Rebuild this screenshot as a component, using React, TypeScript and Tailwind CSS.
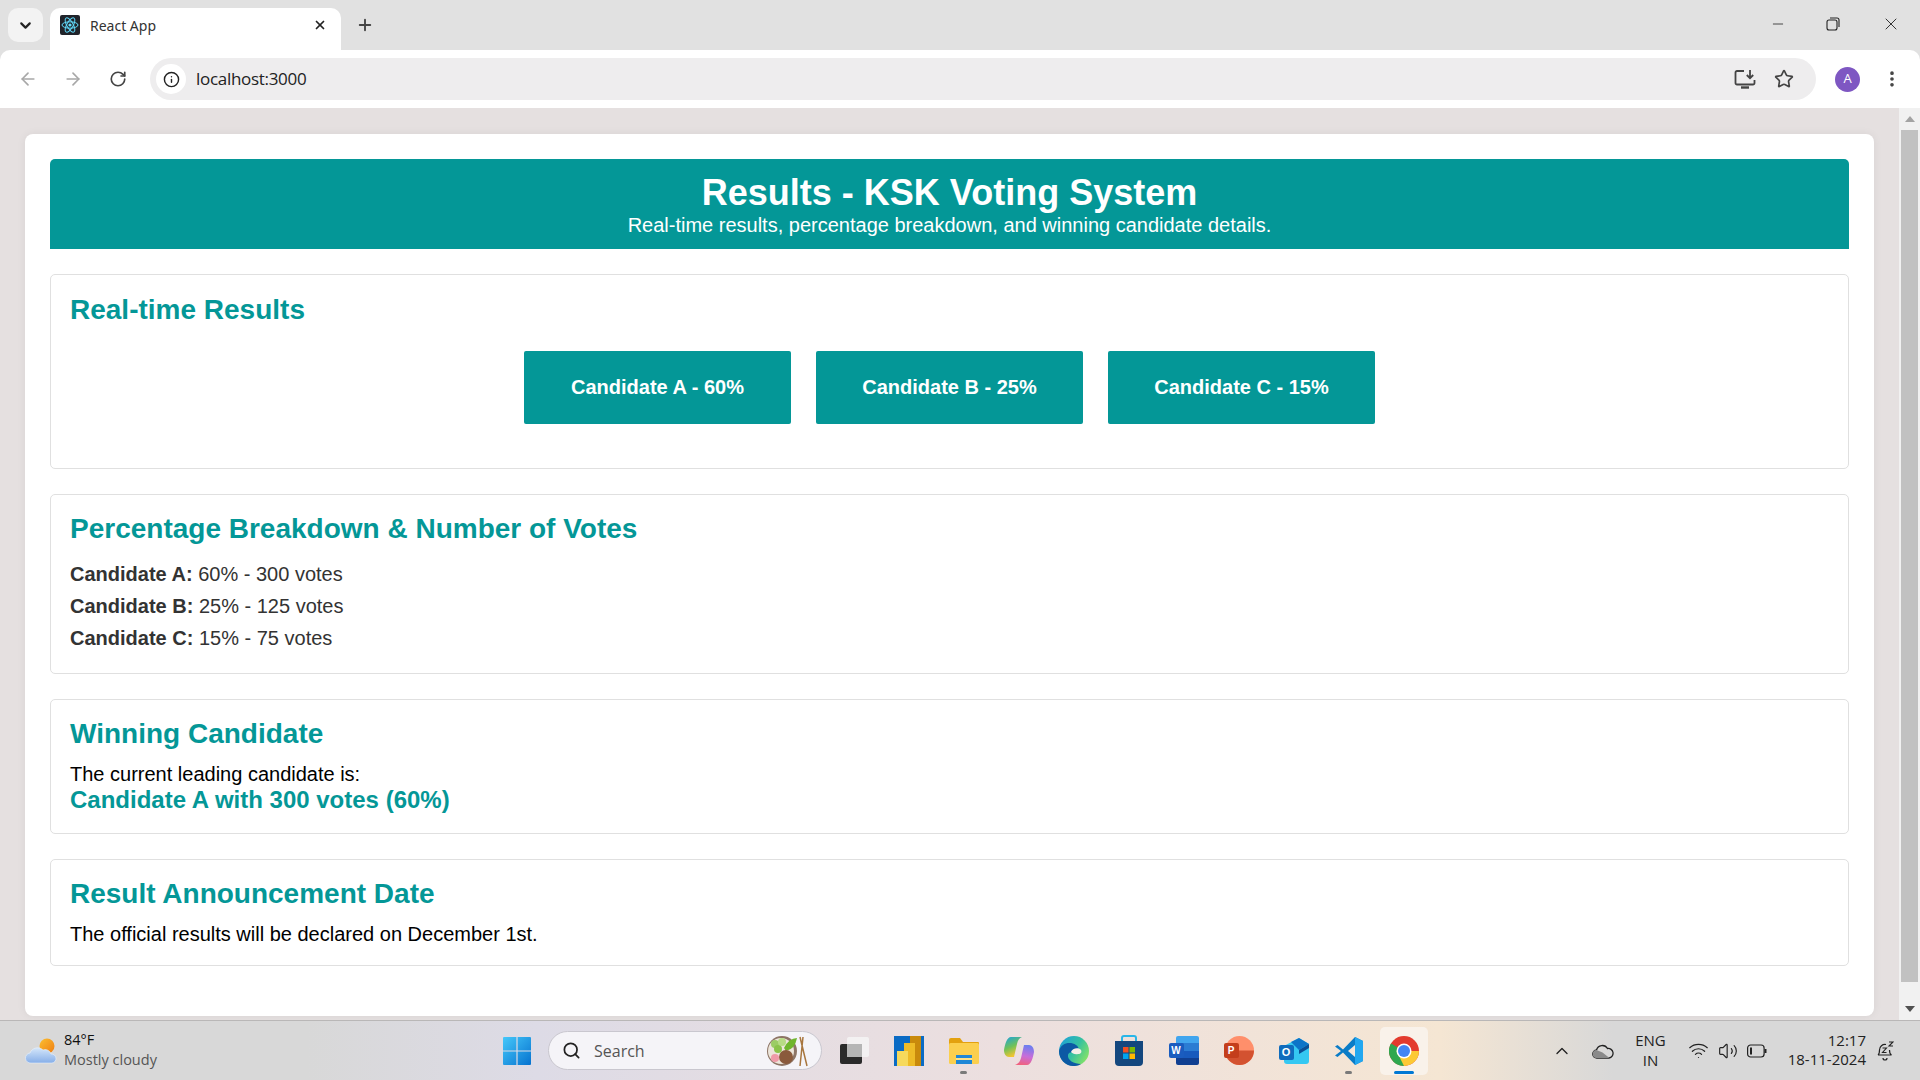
import { ChevronDown, X, Plus, ArrowLeft, ArrowRight, RotateCw, Info, Star, EllipsisVertical, Minus, Search, ChevronUp, Wifi, Volume2 } from 'lucide-react'

const candidates = [
  { name: 'Candidate A', pct: 60, votes: 300 },
  { name: 'Candidate B', pct: 25, votes: 125 },
  { name: 'Candidate C', pct: 15, votes: 75 },
]

function ReactFavicon() {
  return (
    <svg width="20" height="20" viewBox="0 0 20 20" className="shrink-0">
      <rect width="20" height="20" rx="2" fill="#20232a" />
      <g fill="none" stroke="#61dafb" strokeWidth="1">
        <ellipse cx="10" cy="10" rx="8" ry="3.2" />
        <ellipse cx="10" cy="10" rx="8" ry="3.2" transform="rotate(60 10 10)" />
        <ellipse cx="10" cy="10" rx="8" ry="3.2" transform="rotate(120 10 10)" />
      </g>
      <circle cx="10" cy="10" r="1.6" fill="#61dafb" />
    </svg>
  )
}

function TabStrip() {
  return (
    <div className="h-[50px] bg-[#e1e1e1] flex shrink-0 relative">
      <div className="mt-2 ml-2 w-[35px] h-[34px] rounded-[10px] bg-[#f3f3f3] flex items-center justify-center">
        <ChevronDown className="w-[17px] h-[17px] text-[#222]" strokeWidth={3} />
      </div>
      <div className="mt-2 ml-[7px] w-[291px] h-[42px] bg-white rounded-t-[10px] flex items-center pl-[10px] pr-[14px] pb-[8px]">
        <ReactFavicon />
        <span className="ml-[10px] text-[14px] text-[#333] flex-1">React App</span>
        <X className="w-[14px] h-[14px] text-[#222]" strokeWidth={3} />
      </div>
      <Plus className="w-[18px] h-[18px] text-[#444] mt-[16px] ml-[15px]" strokeWidth={2.5} />
      <div className="ml-auto flex items-start text-[#222]">
        <Minus className="w-[16px] h-[16px] mt-[16px] mr-[40px]" strokeWidth={1.2} />
        <svg width="14" height="14" viewBox="0 0 14 14" fill="none" stroke="#222" strokeWidth="1.1" className="mt-[17px] mr-[41px]">
          <rect x="1" y="3" width="10" height="10" rx="2" />
          <path d="M4 1h7a2 2 0 0 1 2 2v7" />
        </svg>
        <X className="w-[20px] h-[20px] mt-[14px] mr-[19px]" strokeWidth={1.1} />
      </div>
    </div>
  )
}

function Toolbar() {
  return (
    <div className="h-[58px] bg-white rounded-t-[10px] flex items-center shrink-0 pl-[18px] pr-[20px] relative">
      <ArrowLeft className="w-[20px] h-[20px] text-[#a8a8a8] mr-[25px]" strokeWidth={2} />
      <ArrowRight className="w-[20px] h-[20px] text-[#a8a8a8] mr-[26px]" strokeWidth={2} />
      <RotateCw className="w-[18px] h-[18px] text-[#444] mr-[23px]" strokeWidth={2.2} />
      <div className="flex-1 h-[42px] mr-[20px] rounded-full bg-[#eeedee] flex items-center pl-[6px] pr-[22px]">
        <div className="w-[30px] h-[30px] rounded-full bg-white flex items-center justify-center">
          <Info className="w-[17px] h-[17px] text-[#222]" strokeWidth={2} />
        </div>
        <span className="ml-[10px] text-[17px] text-[#222] flex-1 font-['Open_Sans',sans-serif] tracking-[-0.3px]">localhost:3000</span>
        <svg width="22" height="20" viewBox="0 0 22 20" fill="none" stroke="#444" strokeWidth="1.8" className="mr-[18px]">
          <path d="M10 2H3a1.5 1.5 0 0 0-1.5 1.5V14A1.5 1.5 0 0 0 3 15.5h16a1.5 1.5 0 0 0 1.5-1.5v-3" />
          <path d="M7 18.5h8" strokeWidth="2.4" />
          <path d="M16 1v8M12.8 6l3.2 3.2L19.2 6" />
        </svg>
        <Star className="w-[20px] h-[20px] text-[#444]" strokeWidth={2} />
      </div>
      <div className="w-[25px] h-[25px] rounded-full bg-[#7e57c2] text-white text-[13px] flex items-center justify-center mr-[22px] ml-[-1px] font-['Open_Sans',sans-serif]">A</div>
      <EllipsisVertical className="w-[20px] h-[20px] text-[#444] mr-[-2px]" strokeWidth={2.4} />
    </div>
  )
}

function Section({ title, className, children }: { title: string; className: string; children: React.ReactNode }) {
  return (
    <section className={`border border-[#e0e0e0] rounded-[5px] px-[19px] mb-[25px] ${className}`}>
      <h2 className="text-[28px] leading-[33px] font-bold text-[#049797]">{title}</h2>
      {children}
    </section>
  )
}

function ResultsPage() {
  return (
    <main className="flex-1 min-w-0 bg-[#e5e0e0] pt-[26px] pl-[25px] pr-[25px] font-['Liberation_Sans',Arial,sans-serif]">
      <div className="bg-white rounded-[8px] h-[882px] p-[25px] shadow-[0_0_10px_rgba(0,0,0,0.06)]">
        <header className="bg-[#049797] text-white rounded-t-[5px] h-[90px] mb-[25px] flex flex-col items-center pt-[12px]">
          <h1 className="text-[36px] leading-[44px] font-bold">Results - KSK Voting System</h1>
          <p className="text-[20px] leading-[20px]">Real-time results, percentage breakdown, and winning candidate details.</p>
        </header>

        <Section title="Real-time Results" className="pt-[18px] pb-[44px]">
          <div className="flex justify-center gap-[25px] mt-[25px]">
            {candidates.map((c) => (
              <div key={c.name} className="w-[267px] h-[73px] pb-[2px] bg-[#049797] text-white rounded-[2px] text-[20px] font-bold flex items-center justify-center">
                {c.name} - {c.pct}%
              </div>
            ))}
          </div>
        </Section>

        <Section title="Percentage Breakdown & Number of Votes" className="pt-[17px] pb-[19px]">
          <ul className="mt-[13px] text-[#333] text-[20px] leading-[32px]">
            {candidates.map((c) => (
              <li key={c.name}>
                <strong>{c.name}:</strong> {c.pct}% - {c.votes} votes
              </li>
            ))}
          </ul>
        </Section>

        <Section title="Winning Candidate" className="pt-[17px] pb-[20px]">
          <p className="mt-[12px] text-black text-[20px] leading-[25px]">The current leading candidate is:</p>
          <p className="text-[#049797] text-[24px] leading-[26px] font-bold">Candidate A with 300 votes (60%)</p>
        </Section>

        <Section title="Result Announcement Date" className="pt-[17px] pb-[14px]">
          <p className="mt-[7px] text-black text-[20px] leading-[34px]">The official results will be declared on December 1st.</p>
        </Section>
      </div>
    </main>
  )
}

function Scrollbar() {
  return (
    <aside className="w-[21px] bg-[#f1f1f1] flex flex-col items-center shrink-0">
      <div className="h-[22px] flex items-center justify-center">
        <div className="w-0 h-0 border-l-[5px] border-r-[5px] border-b-[6px] border-l-transparent border-r-transparent border-b-[#a3a3a3]" />
      </div>
      <div className="w-[17px] h-[852px] bg-[#c1c1c1]" />
      <div className="mt-auto h-[22px] flex items-center justify-center">
        <div className="w-0 h-0 border-l-[5px] border-r-[5px] border-t-[6px] border-l-transparent border-r-transparent border-t-[#505050]" />
      </div>
    </aside>
  )
}

function AppSlot({ children, running, active }: { children: React.ReactNode; running?: boolean; active?: boolean }) {
  return (
    <div className={`w-[48px] h-[48px] mx-[3.5px] rounded-[5px] flex items-center justify-center relative ${active ? 'bg-[#f9f2ea]' : ''}`}>
      {children}
      {running && <span className="absolute bottom-[1px] w-[7px] h-[3px] rounded-full bg-[#7a7a7a]" />}
      {active && <span className="absolute bottom-[1px] w-[20px] h-[3px] rounded-full bg-[#0078d4]" />}
    </div>
  )
}

function WindowsLogo() {
  return (
    <svg width="30" height="30" viewBox="0 0 30 30">
      <defs>
        <linearGradient id="win" x1="0" y1="0" x2="1" y2="1">
          <stop offset="0" stopColor="#45c8fa" />
          <stop offset="1" stopColor="#0672cf" />
        </linearGradient>
      </defs>
      <path fill="url(#win)" d="M1 2a1 1 0 0 1 1-1h12.4v13.4H1zM15.6 1H28a1 1 0 0 1 1 1v12.4H15.6zM1 15.6h13.4V29H2a1 1 0 0 1-1-1zM15.6 15.6H29V28a1 1 0 0 1-1 1H15.6z" />
    </svg>
  )
}

function SearchBox() {
  return (
    <div className="w-[274px] h-[39px] mx-[4px] rounded-full bg-[#f5f4f8] border border-[#c9c7cf] flex items-center pl-[13px] pr-[12px] relative">
      <Search className="w-[19px] h-[19px] text-[#222]" strokeWidth={2.2} />
      <span className="ml-[13px] text-[16px] text-[#555] font-['Open_Sans',sans-serif]">Search</span>
      <svg width="42" height="32" viewBox="0 0 42 32" className="absolute right-[12px] top-[3px]">
        <circle cx="15" cy="16" r="15" fill="#8d7566" />
        <circle cx="14" cy="16" r="13" fill="#ece5da" />
        <circle cx="8" cy="9" r="4" fill="#9ccc65" />
        <circle cx="15" cy="7" r="4" fill="#b7dc84" />
        <circle cx="11" cy="14" r="4" fill="#8bc34a" />
        <path d="M17 13 Q22 3 30 3 Q28 14 19 16z" fill="#6fb52c" />
        <circle cx="8" cy="23" r="4" fill="#ef9aa8" />
        <circle cx="19" cy="22" r="7" fill="#8a5a3c" />
        <path d="M33 2 L40 31 M36 2 L33 31" stroke="#a8763e" strokeWidth="1.5" />
      </svg>
    </div>
  )
}

function TaskViewIcon() {
  return (
    <svg width="30" height="30" viewBox="0 0 30 30">
      <rect x="1" y="8" width="22" height="20" rx="2" fill="#2a2a2a" />
      <rect x="8" y="1" width="22" height="20" rx="2" fill="#f4f4f4" fillOpacity="0.85" />
      <rect x="8" y="8" width="15" height="13" fill="#b5b5b5" />
    </svg>
  )
}

function PowerBiIcon() {
  return (
    <svg width="30" height="30" viewBox="0 0 30 30">
      <rect width="30" height="30" fill="#0a6bc4" />
      <rect x="16" y="0" width="11" height="30" fill="#c98a0c" />
      <rect x="10" y="7" width="11" height="23" fill="#eebb27" />
      <rect x="3" y="15" width="11" height="15" fill="#f6d95c" />
    </svg>
  )
}

function FolderIcon() {
  return (
    <svg width="32" height="28" viewBox="0 0 32 28">
      <path d="M1 3a2 2 0 0 1 2-2h9l3 4h15a1 1 0 0 1 1 1v3H1z" fill="#e3a10f" />
      <rect x="1" y="6" width="30" height="21" rx="1.500" fill="#fbcf4e" />
      <rect x="8" y="18" width="16" height="9" fill="#1f87d6" />
      <rect x="8" y="21" width="16" height="2" fill="#fbe08a" />
    </svg>
  )
}

function CopilotIcon() {
  return (
    <svg width="32" height="30" viewBox="0 0 32 30">
      <defs>
        <linearGradient id="cp1" x1="0" y1="0" x2="0.4" y2="1">
          <stop offset="0" stopColor="#1aa2e0" />
          <stop offset="0.55" stopColor="#6fc15a" />
          <stop offset="1" stopColor="#f7c52e" />
        </linearGradient>
        <linearGradient id="cp2" x1="0.6" y1="0" x2="0.4" y2="1">
          <stop offset="0" stopColor="#6a7ff0" />
          <stop offset="0.55" stopColor="#c86dd9" />
          <stop offset="1" stopColor="#f0627e" />
        </linearGradient>
      </defs>
      <path d="M8 1h11c-3 1-4 3-5 7l-3 13H6C3 21 1 18 1 14 2 8 4 1 8 1z" fill="url(#cp1)" />
      <path d="M24 29H12c3-1 5-3 6-7l3-13h5c3 0 5 3 5 7-1 6-3 13-7 13z" fill="url(#cp2)" />
    </svg>
  )
}

function EdgeIcon() {
  return (
    <svg width="32" height="32" viewBox="0 0 32 32">
      <defs>
        <linearGradient id="ed" x1="0" y1="0" x2="1" y2="0.6">
          <stop offset="0" stopColor="#1b9de2" />
          <stop offset="0.6" stopColor="#35c1a0" />
          <stop offset="1" stopColor="#7fe06b" />
        </linearGradient>
      </defs>
      <circle cx="16" cy="16" r="15" fill="url(#ed)" />
      <path d="M1 16C3 8 12 6 18 10c3 2 4 6 1 7-4 1-8-1-9 3-1 5 6 9 13 9-3 2-6 2-8 2C7 31 1 24 1 16z" fill="#0c59a4" />
      <path d="M13 17c1-4 8-5 10-2 1 2 0 4-3 4-3 1-6-1-7-2z" fill="#f4eee8" />
    </svg>
  )
}

function StoreIcon() {
  return (
    <svg width="30" height="32" viewBox="0 0 30 32">
      <path d="M8 6V3a2 2 0 0 1 2-2h10a2 2 0 0 1 2 2v3" fill="none" stroke="#29b6e8" strokeWidth="2" />
      <path d="M1 6h28v21a4 4 0 0 1-4 4H5a4 4 0 0 1-4-4z" fill="#14477e" />
      <rect x="9" y="12" width="5.500" height="5.500" fill="#f25022" />
      <rect x="15.500" y="12" width="5.500" height="5.500" fill="#7fba00" />
      <rect x="9" y="18.500" width="5.500" height="5.500" fill="#00a4ef" />
      <rect x="15.500" y="18.500" width="5.500" height="5.500" fill="#ffb900" />
    </svg>
  )
}

function WordIcon() {
  return (
    <div className="relative w-[30px] h-[29px]">
      <div className="absolute right-0 top-0 w-[23px] h-[29px] rounded-[2px] overflow-hidden flex flex-col">
        <div className="flex-1 bg-[#41a5ee]" />
        <div className="flex-1 bg-[#2b7cd3]" />
        <div className="flex-1 bg-[#185abd]" />
        <div className="flex-1 bg-[#103f91]" />
      </div>
      <div className="absolute left-0 top-[7px] w-[15px] h-[15px] rounded-[2px] bg-[#1a5cbf] text-white text-[10px] font-bold flex items-center justify-center font-['Liberation_Sans',sans-serif]">W</div>
    </div>
  )
}

function PowerPointIcon() {
  return (
    <div className="relative w-[30px] h-[29px]">
      <svg width="30" height="29" viewBox="0 0 30 29" className="absolute inset-0">
        <circle cx="15.500" cy="14.500" r="14.500" fill="#ff8f6b" />
        <path d="M15.500 14.500H30A14.500 14.500 0 0 1 1 14.500z" fill="#d35230" />
      </svg>
      <div className="absolute left-0 top-[7px] w-[15px] h-[15px] rounded-[2px] bg-[#c43e1c] text-white text-[10px] font-bold flex items-center justify-center font-['Liberation_Sans',sans-serif]">P</div>
    </div>
  )
}

function OutlookIcon() {
  return (
    <div className="relative w-[30px] h-[26px]">
      <svg width="30" height="26" viewBox="0 0 30 26" className="absolute inset-0">
        <path d="M5 8L20 0l10 6v17a3 3 0 0 1-3 3H8a3 3 0 0 1-3-3z" fill="#35c8f2" />
        <path d="M12 4l8-4 10 6-10 6z" fill="#0c74c8" />
        <path d="M20 12l10-6v4l-10 6z" fill="#0a4f96" />
      </svg>
      <div className="absolute left-0 top-[7px] w-[15px] h-[15px] rounded-[2px] bg-[#0f6cbd] text-white text-[11px] font-bold flex items-center justify-center font-['Liberation_Sans',sans-serif]">O</div>
    </div>
  )
}

function VsCodeIcon() {
  return (
    <svg width="30" height="30" viewBox="0 0 30 30">
      <path d="M21 1l8 4v20l-8 4L9 16.500 3.500 21 1 19.500 7 15 1 10.500 3.500 9 9 13.500z" fill="#0a7cc7" />
      <path d="M21 1l8 4v20l-8 4z" fill="#22a7f0" />
      <path d="M21 9l-7 6 7 6z" fill="#f5e8dc" />
    </svg>
  )
}

function ChromeIcon() {
  return (
    <svg width="30" height="30" viewBox="0 0 30 30">
      <circle cx="15" cy="15" r="15" fill="#e33b2e" />
      <path d="M15 15L2 7.500A15 15 0 0 0 15 30z" fill="#2fa84f" />
      <path d="M15 15h15a15 15 0 0 1-15 15L7.500 15z" fill="#fcc934" />
      <circle cx="15" cy="15" r="7.500" fill="#fff" />
      <circle cx="15" cy="15" r="6" fill="#4285f4" />
    </svg>
  )
}

function WeatherIcon() {
  return (
    <svg width="32" height="26" viewBox="0 0 32 26">
      <defs>
        <linearGradient id="sun" x1="0" y1="0" x2="1" y2="1">
          <stop offset="0" stopColor="#fcbf30" />
          <stop offset="1" stopColor="#ee7d12" />
        </linearGradient>
        <linearGradient id="cloud" x1="0" y1="0" x2="0" y2="1">
          <stop offset="0" stopColor="#d4e6fa" />
          <stop offset="1" stopColor="#86aee8" />
        </linearGradient>
      </defs>
      <circle cx="22" cy="8" r="7.500" fill="url(#sun)" />
      <path d="M6 25a5 5 0 0 1-1-10 8 8 0 0 1 13-3 6 6 0 0 1 8 4 4.500 4.500 0 0 1 1 9z" fill="url(#cloud)" stroke="#e8f1fb" strokeWidth="0.6" />
    </svg>
  )
}

function Taskbar() {
  return (
    <footer className="h-[60px] shrink-0 border-t border-[#b9b7b7] flex items-center bg-[linear-gradient(90deg,#d8d8d8_0%,#d8d8d8_16%,#dddbe6_28%,#ecdfdf_52%,#f5e6d3_75%,#d8d8d8_84%,#d8d8d8_100%)] font-['Open_Sans',sans-serif] relative">
      <div className="w-[489px] shrink-0 flex items-center pl-[25px]">
        <WeatherIcon />
        <div className="ml-[7px] text-[14.500px] leading-[20px] pb-[2px]">
          <div className="text-[#111]">84°F</div>
          <div className="text-[#555]">Mostly cloudy</div>
        </div>
      </div>
      <div className="flex items-center">
        <AppSlot><WindowsLogo /></AppSlot>
        <SearchBox />
        <AppSlot><TaskViewIcon /></AppSlot>
        <AppSlot><PowerBiIcon /></AppSlot>
        <AppSlot running><FolderIcon /></AppSlot>
        <AppSlot><CopilotIcon /></AppSlot>
        <AppSlot><EdgeIcon /></AppSlot>
        <AppSlot><StoreIcon /></AppSlot>
        <AppSlot><WordIcon /></AppSlot>
        <AppSlot><PowerPointIcon /></AppSlot>
        <AppSlot><OutlookIcon /></AppSlot>
        <AppSlot running><VsCodeIcon /></AppSlot>
        <AppSlot active><ChromeIcon /></AppSlot>
      </div>
      <div className="ml-auto flex items-center text-[#222] pr-[26px]">
        <ChevronUp className="w-[20px] h-[20px] mr-[20px]" strokeWidth={1.6} />
        <svg width="22" height="16" viewBox="0 0 22 16" className="mr-[21px]">
          <path d="M5 15a4 4 0 0 1-.5-8 6 6 0 0 1 11-1.500A4.600 4.600 0 0 1 17 15z" fill="none" stroke="#222" strokeWidth="1.3" />
          <path d="M5 15a4 4 0 0 1-.5-8l6 2.500 7 5.500z" fill="#8a8a8a" />
        </svg>
        <div className="text-[15px] leading-[20px] text-center mr-[22px] pb-[1px]">
          <div>ENG</div>
          <div>IN</div>
        </div>
        <Wifi className="w-[21px] h-[21px] mr-[9px]" strokeWidth={1.4} />
        <Volume2 className="w-[20px] h-[20px] mr-[9px]" strokeWidth={1.4} />
        <svg width="20" height="14" viewBox="0 0 20 14" fill="none" stroke="#222" strokeWidth="1.2" className="mr-[21px]">
          <rect x="0.6" y="1" width="16.500" height="12" rx="3" />
          <rect x="3" y="3.500" width="2" height="7" fill="#222" stroke="none" />
          <path d="M18.500 5v4" strokeWidth="2" />
        </svg>
        <div className="text-[15px] leading-[19px] text-right mr-[10px] pb-[2px]">
          <div>12:17</div>
          <div>18-11-2024</div>
        </div>
        <svg width="18" height="20" viewBox="0 0 18 20" fill="none" stroke="#222" strokeWidth="1.2">
          <path d="M2 14c1.500-1 1.500-2.500 1.500-5A5.500 5.500 0 0 1 10 3.500M13.500 9c0 2.500 0 4 2 5H2M7 17a2 2 0 0 0 4 0" />
          <path d="M6.500 7h4l-4 4.500h4M13 1h4l-4 4h4" strokeWidth="1.1" />
        </svg>
      </div>
    </footer>
  )
}

export default function App() {
  return (
    <div className="w-[1920px] h-[1080px] flex flex-col overflow-hidden bg-[#e1e1e1] font-['Noto_Sans',sans-serif]">
      <TabStrip />
      <Toolbar />
      <div className="flex-1 min-h-0 flex overflow-hidden">
        <ResultsPage />
        <Scrollbar />
      </div>
      <Taskbar />
    </div>
  )
}
